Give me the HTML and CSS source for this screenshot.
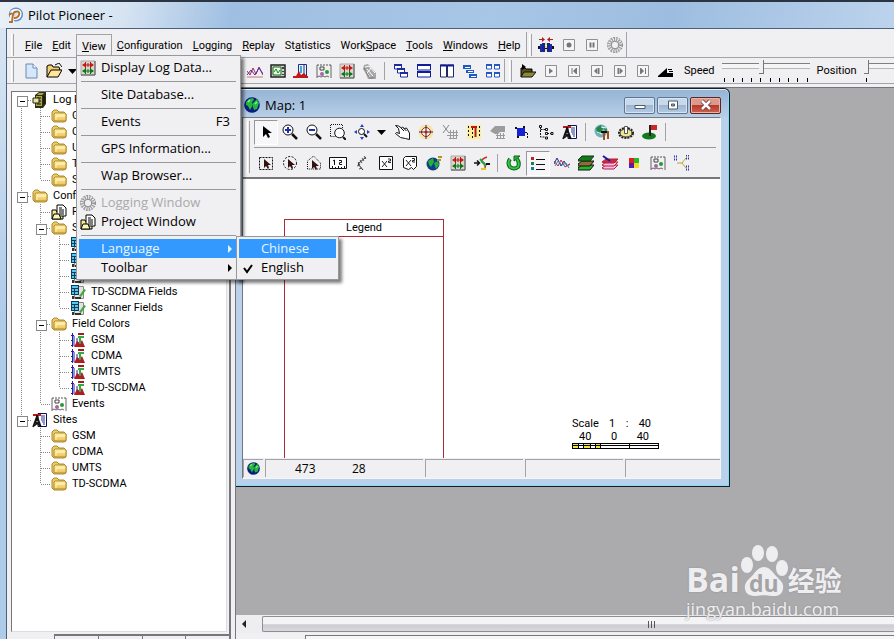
FILE: index.html
```html
<!DOCTYPE html>
<html lang="en">
<head>
<meta charset="utf-8">
<title>Pilot Pioneer</title>
<link rel="stylesheet" href="styles.css">
</head>
<body>
<svg class="defs" aria-hidden="true">
  <defs>
    <linearGradient id="fold" x1="0" y1="0" x2="0" y2="1"><stop offset="0" stop-color="#fff3b0"/><stop offset="1" stop-color="#e9c257"/></linearGradient>
    <radialGradient id="ball"><stop offset="0" stop-color="#dff0ff"/><stop offset="1" stop-color="#4b86c8"/></radialGradient>
  </defs>
  <symbol id="logo" viewBox="0 0 16 16"><circle cx="9" cy="7.500" r="7" fill="url(#ball)"/><path d="M5 15V7q0-3 4-3t3.500 3.500T7 11" fill="none" stroke="#fff" stroke-width="4"/><path d="M2 15h3l1-8q1-2.500 4-2.500T12 8q-1 3-5 3M2 8l3-2" fill="none" stroke="#b5702b" stroke-width="2"/></symbol>
  <symbol id="folder" viewBox="0 0 16 16"><path d="M1 12V4l2-2h3l2 2h5l1 1v1h1v7l-2 1H3z" fill="#eccb68" stroke="#b08a2e"/><path d="M3 13V6l1-1h10l1 1v6l-1 1z" fill="url(#fold)" stroke="#b48a2a"/><path d="M5 12V8h9" fill="none" stroke="#fff6c8"/></symbol>
  <symbol id="server" viewBox="0 0 16 16"><path d="M3 3l4-3h7v12l-3 4H3z" fill="#2d2f10"/><path d="M4 4h6v10H4zM7 1h5l-2 2H5z" fill="#a9a74a"/><path d="M5 6h4M5 9h4M5 12h4M12 4v8" stroke="#111" fill="none"/><path d="M1 6h6v5H1z" fill="#e8e69a" stroke="#222"/></symbol>
  <symbol id="project" viewBox="0 0 16 16"><path d="M1 15V6h4l1 2h6v7z" fill="#f7f08a" stroke="#000"/><path d="M6 1h6l3 3v8H6z" fill="#fff" stroke="#000"/><path d="M8 4h3M8 6h5M8 8h5M8 10h5" stroke="#000"/><path d="M1 15l2-5h5l2 5z" fill="#fdf9b4" stroke="#000"/></symbol>
  <symbol id="fields" viewBox="0 0 16 16"><path d="M4.500 2.500h9v12h-9z" fill="#e4e4dc" stroke="#888"/><path d="M1 1h8v10H1z" fill="#103c5c"/><path d="M2 2h6v2H2zM2 5h2v2H2zM5 5h3v2H5zM2 8h2v2H2zM5 8h3v2H5z" fill="#58c8f0"/><path d="M2 12h2v3H2zM5 13h6v2H5z" fill="#333"/><path d="M9 12l5-7 2 1-5 7z" fill="#4aa34a"/></symbol>
  <symbol id="colors" viewBox="0 0 16 16"><path d="M2.500 1v14M1 3.500h3M1 8.500h2M1 13.500h2" stroke="#2020a0" fill="none"/><path d="M4 4v10M7 6v8" stroke="#2020a0" stroke-width="1"/><path d="M4 15l3-6 3 2 2-3 3 7z" fill="#b01c20"/><path d="M8 1h6v2H8z" fill="#a02020"/><path d="M8 4h6v2h-3v6H9V6H8z" fill="#3aa845"/></symbol>
  <symbol id="events" viewBox="0 0 16 16"><path d="M1 2v13M15 2v13M1 14l2-1 2 1 2-1 2 1 2-1 2 1" fill="none" stroke="#666"/><path d="M1 2h14" stroke="#555" stroke-dasharray="2 1"/><path d="M4 4h4v3H4z" fill="none" stroke="#444"/><circle cx="11" cy="9" r="2" fill="#269a35"/><circle cx="6" cy="11" r="2" fill="#a467a5"/></symbol>
  <symbol id="sites" viewBox="0 0 16 16"><path d="M6 1.500h8.500v13H6z" fill="#fff" stroke="#101050"/><path d="M9 4h4M9 6h4M9 8h4M10 10h3M11 12h2" stroke="#2030a0"/><path d="M1 15L5 4l4 11M3 11h4M2 14l5-4M3 9l5 5M3 8h4" fill="none" stroke="#111" stroke-width="1.500"/><path d="M1 2h8v2H1z" fill="#c01818"/><path d="M4 3h2v6H4z" fill="#111"/></symbol>
  <symbol id="logdata" viewBox="0 0 16 16"><path d="M1 1h14v14H1z" fill="#d8d6cc" stroke="#aaa"/><path d="M15 1v14H1" fill="none" stroke="#555"/><path d="M3 5h10M5.500 2v6M8 3v4M10.500 2v6" stroke="#c01010" fill="none"/><path d="M3 11h10M5.500 8v6M8 9v4M10.500 8v6" stroke="#087818" fill="none"/><path d="M2 5l3-2v4zM14 5l-3-2v4z" fill="#d01818"/><path d="M2 11l3-2v4zM14 11l-3-2v4z" fill="#087818"/></symbol>
  <symbol id="ring" viewBox="0 0 16 16"><circle cx="8" cy="8" r="7.500" fill="none" stroke="#868686" stroke-dasharray="2 1"/><circle cx="8" cy="8" r="5.500" fill="none" stroke="#9a9a9a" stroke-width="3" stroke-dasharray="1.200 1"/><circle cx="8" cy="8" r="3.800" fill="none" stroke="#868686"/></symbol>
  <symbol id="new" viewBox="0 0 16 16"><path d="M3 1h7l4 4v10H3z" fill="#d5e8fb" stroke="#6689b4"/><path d="M10 1v4h4" fill="#fff" stroke="#6689b4"/></symbol>
  <symbol id="open" viewBox="0 0 16 16"><path d="M1 14V3l2-1h3l1 2h6l1 3" fill="#f2cf72" stroke="#000"/><path d="M1 14L5 7h11l-4 7z" fill="#ffe69a" stroke="#000"/><path d="M9 2l4-2 3 4" fill="none" stroke="#111"/></symbol>
  <symbol id="lines" viewBox="0 0 16 16"><path d="M0 8l3 4 3-7 3 6 3-7 4 8" fill="none" stroke="#b02050"/><path d="M0 12l4-5 4 5 4-7 4 6" fill="none" stroke="#4830a8"/><path d="M0 14h16" stroke="#c77"/></symbol>
  <symbol id="scope" viewBox="0 0 16 16"><path d="M1 2h14v12H1z" fill="#d6d8c8" stroke="#222" stroke-width="1.500"/><path d="M3 4h8v8H3z" fill="#e8f8e8" stroke="#126a1c"/><path d="M4 9l2-3 2 4 2-3" fill="none" stroke="#1b8428"/><path d="M13 4v2M13 8v1M13 11v1" stroke="#111" stroke-width="1.500"/></symbol>
  <symbol id="hist" viewBox="0 0 16 16"><path d="M5.500 1.500h8v12h-8z" fill="#e8f2ff" stroke="#203080"/><path d="M7 3h2v7H7z" fill="#46a8d8"/><path d="M11 2v11" stroke="#203080"/><path d="M0 15v-2h3l3-5 2 4 3-2 3 3h1v2z" fill="#c01818"/></symbol>
  <symbol id="dish" viewBox="0 0 16 16"><path d="M2 2l4-1 8 9v4l-3 2H6L4 11 1 6z" fill="#a6a6a6"/><path d="M3 4l4-1 6 7M3 7l5 7M5 6l6 7M9 5l-4 5" fill="none" stroke="#fff"/><path d="M7 15h7M2 5l5 9" stroke="#777" fill="none"/></symbol>
  <symbol id="cascade" viewBox="0 0 16 16"><g fill="#fff" stroke="#1c2c9c"><path d="M1.500 2h7v4h-7zM4.500 6h7v4h-7zM7.500 10h7v4h-7z"/></g><path d="M1 2h8M4 6h8M7 10h8" stroke="#1c2c9c" stroke-width="2"/></symbol>
  <symbol id="tileh" viewBox="0 0 16 16"><path d="M1.500 2h13v5h-13zM1.500 9h13v5h-13z" fill="#fff" stroke="#101c98"/><path d="M1 2h14M1 9h14" stroke="#101c98" stroke-width="2"/></symbol>
  <symbol id="tilev" viewBox="0 0 16 16"><path d="M1.500 2h6v12h-6zM8.500 2h6v12h-6z" fill="#fff" stroke="#222860"/><path d="M1 2.500h14" stroke="#101c98" stroke-width="2"/></symbol>
  <symbol id="stairs" viewBox="0 0 16 16"><path d="M1 2h8v4H1zM4 7h8v3H4zM7 11h8v4H7z" fill="#1c5ac4"/><path d="M3 4.500h5M6 8.500h5M9 13.500h5" stroke="#fff"/></symbol>
  <symbol id="tiles" viewBox="0 0 16 16"><g fill="#fff" stroke="#2458c0"><path d="M1.500 2h5v4h-5zM9.500 2h5v4h-5zM1.500 10h5v4h-5zM9.500 10h5v4h-5z"/></g><path d="M1 2h6M9 2h6M1 10h6M9 10h6" stroke="#2458c0" stroke-width="2"/></symbol>
  <symbol id="olive" viewBox="0 0 16 16"><path d="M1 14V5h4l1 1h6v3" fill="#55501a" stroke="#000"/><path d="M1 14l3-5h12l-4 5z" fill="#8c8836" stroke="#111"/><path d="M2 1l4 3-4 3z" fill="#000"/></symbol>
  <symbol id="cars" viewBox="0 0 16 16"><path d="M1 2.500h4M11 2.500h4" stroke="#b02020"/><path d="M4 0l3 2.500L4 5zM12 0L9 2.500 12 5z" fill="#b02020"/><path d="M0 10.500h16" stroke="#111" stroke-width="3"/><path d="M2 7h2v8H2zM12 7h2v8h-2z" fill="#1c2ca4"/><path d="M4 6h3v9H4zM9 6h3v9H9z" fill="#1420a0"/><path d="M8 6v9" stroke="#e8e048" stroke-width="2" stroke-dasharray="2 1"/></symbol>
  <symbol id="rec" viewBox="0 0 16 16"><path d="M2.500 2.500h11v11h-11z" fill="#f6f5f6" stroke="#909090"/><circle cx="8" cy="8" r="2.500" fill="#777"/></symbol>
  <symbol id="pause" viewBox="0 0 16 16"><path d="M2.500 2.500h11v11h-11z" fill="#f6f5f6" stroke="#909090"/><path d="M6.500 5.500v5M9.500 5.500v5" stroke="#777" stroke-width="2"/></symbol>
  <symbol id="play" viewBox="0 0 16 16"><path d="M2.500 2.500h11v11h-11z" fill="#f6f5f6" stroke="#909090"/><path d="M6 5l4 3-4 3z" fill="#777"/></symbol>
  <symbol id="first" viewBox="0 0 16 16"><path d="M2.500 2.500h11v11h-11z" fill="#f6f5f6" stroke="#909090"/><path d="M6 5v6M10.500 5v6" stroke="#777"/><path d="M10 5L7 8l3 3z" fill="#777"/></symbol>
  <symbol id="prev" viewBox="0 0 16 16"><path d="M2.500 2.500h11v11h-11z" fill="#f6f5f6" stroke="#909090"/><path d="M8 5L5 8l3 3z" fill="#777"/><path d="M9.500 5v6" stroke="#777" stroke-width="2"/></symbol>
  <symbol id="next" viewBox="0 0 16 16"><path d="M2.500 2.500h11v11h-11z" fill="#f6f5f6" stroke="#909090"/><path d="M8 5l3 3-3 3z" fill="#777"/><path d="M6.500 5v6" stroke="#777" stroke-width="2"/></symbol>
  <symbol id="last" viewBox="0 0 16 16"><path d="M2.500 2.500h11v11h-11z" fill="#f6f5f6" stroke="#909090"/><path d="M6 5l3 3-3 3z" fill="#777"/><path d="M5.500 5v6M10.500 5v6" stroke="#777"/></symbol>
  <symbol id="ramp" viewBox="0 0 16 16"><path d="M0 14v-1l9-8v5h6v4z" fill="#000"/><path d="M10 6.500h4M11 8.500h4" stroke="#000"/></symbol>
  <symbol id="caret" viewBox="0 0 10 16"><path d="M0 6h9L4.500 11z" fill="#000"/></symbol>
  <symbol id="globe" viewBox="0 0 16 16"><circle cx="8" cy="8" r="7.800" fill="#0c1c80"/><path d="M2 5l3-3 4-1 1 2-2 2 1 3-3 5-2-4-2-1zM9 6l4-4 2 4-2 6-3 1-1-3z" fill="#22b83c"/><path d="M4 5l2-2M11 7l2-2" stroke="#8df08d" stroke-width="1.500"/></symbol>
  <symbol id="arrow" viewBox="0 0 16 16"><path d="M5 2v11l3-3 2 4 2-1-2-4h4z" fill="#000"/></symbol>
  <symbol id="zin" viewBox="0 0 16 16"><circle cx="6" cy="6" r="5" fill="#fff" stroke="#111"/><path d="M10 10l5 5" stroke="#111" stroke-width="2.500"/><path d="M3 6h6M6 3v6" stroke="#1830b0" stroke-width="2"/></symbol>
  <symbol id="zout" viewBox="0 0 16 16"><circle cx="6" cy="6" r="5" fill="#fff" stroke="#111"/><path d="M10 10l5 5" stroke="#111" stroke-width="2.500"/><path d="M3 6h6" stroke="#1830b0" stroke-width="2"/></symbol>
  <symbol id="zbox" viewBox="0 0 16 16"><path d="M.500 12V.500h12V5M.500 12.500h5" fill="none" stroke="#111" stroke-dasharray="1 1"/><circle cx="9.500" cy="9" r="4.800" fill="#fff" stroke="#111"/><path d="M13 13l3 3" stroke="#111" stroke-width="2"/></symbol>
  <symbol id="zpan" viewBox="0 0 16 16"><path d="M8 0l2 3H6zM8 16l2-3H6zM0 8l3-2v4zM16 8l-3-2v4z" fill="#2440c8"/><circle cx="7.500" cy="7.500" r="3" fill="#fff" stroke="#111"/><path d="M10 10l3 3" stroke="#111" stroke-width="2"/></symbol>
  <symbol id="hand" viewBox="0 0 16 16"><path d="M1.500 1.500l3 3 1 5-3-1-1 1 5 4 5 1 4 1V9l-3-5-2 .5-2-1.500-1 1-3-2z" fill="#fff" stroke="#111"/><path d="M7 4l3 3M9.500 4l3 3" stroke="#111"/></symbol>
  <symbol id="target" viewBox="0 0 16 16"><circle cx="8" cy="8" r="6.500" fill="#fff7c8" stroke="#f5e79a" stroke-width="2"/><circle cx="8" cy="8" r="4.500" fill="none" stroke="#a01838"/><path d="M8 1v14M1 8h14" stroke="#301860"/><circle cx="8" cy="8" r="1.500" fill="#c01818"/></symbol>
  <symbol id="xnet" viewBox="0 0 16 16"><path d="M1 1l6 8M7 1L1 9" stroke="#888" fill="none"/><path d="M6 8.500h10M5 11.500h11M7 14.500h8M8.500 6v9M11.500 6v9M14.500 6v9" stroke="#999"/></symbol>
  <symbol id="tmark" viewBox="0 0 16 16"><path d="M1 1h14v14H1z" fill="#f9ef9c"/><path d="M2.500 2v12M6.500 4v10M13.500 2v12" fill="none" stroke="#111" stroke-dasharray="2 2"/><path d="M5 3h6M9.500 3v10" stroke="#c01818" stroke-width="2"/></symbol>
  <symbol id="graycar" viewBox="0 0 16 16"><path d="M0 7l5-5h10v6h-5l-2 2H5z" fill="#9c9c9c"/><path d="M6 11.500h9M6 14.500h9M7.500 9v6M10.500 9v6M13.500 9v6" stroke="#999"/></symbol>
  <symbol id="polygon" viewBox="0 0 16 16"><path d="M3 4h8v8H3z" fill="#1522d0"/><path d="M1 3h2v2H1zM9 2h2v2H9zM3 12h2v2H3z" fill="#111"/><path d="M11 8.500h2.500V14" fill="none" stroke="#111" stroke-dasharray="2 1"/></symbol>
  <symbol id="org" viewBox="0 0 16 16"><path d="M2.500 3v10h4M2.500 5.500h5M9 9.500h4" fill="none" stroke="#111" stroke-dasharray="2 1"/><path d="M1.500 1.500h2v2h-2zM7.500 4.500h2v2h-2zM7.500 8.500h2v2h-2zM13 8.500h2v2h-2zM7.500 13h2v2h-2z" fill="#fff" stroke="#111"/></symbol>
  <symbol id="earthtool" viewBox="0 0 16 16"><circle cx="7" cy="7" r="6.500" fill="#6cb4bc"/><path d="M2 4l5-3 2 4-4 5-2-2zM9 3l4 2-1 3z" fill="#2a8440"/><path d="M7 3l5 1M3 8l5 2" stroke="#dff"/><path d="M7 7h6v2H7z" fill="#111"/><path d="M10 9v7M14 7v8" fill="none" stroke="#a05020" stroke-width="2"/></symbol>
  <symbol id="gear" viewBox="0 0 16 16"><ellipse cx="8" cy="9" rx="7" ry="5" fill="none" stroke="#222" stroke-width="2" stroke-dasharray="2 1"/><ellipse cx="8" cy="9" rx="6" ry="4" fill="#f0e68c" stroke="#333"/><path d="M6.500 2.500h3v7h-3z" fill="#fff" stroke="#555"/></symbol>
  <symbol id="flag" viewBox="0 0 16 16"><ellipse cx="7" cy="12" rx="7" ry="3.500" fill="#127a1c"/><path d="M8 1v11" stroke="#222" stroke-width="2"/><path d="M9 1h6v5H9z" fill="#cc2828"/></symbol>
  <symbol id="selbox" viewBox="0 0 16 16"><path d="M1.500 2.500h13v12h-13z" fill="none" stroke="#111" stroke-dasharray="2 1"/><path d="M6 4v9l2-2 2 3 1-1-1-3h3z" fill="#311"/></symbol>
  <symbol id="selcirc" viewBox="0 0 16 16"><circle cx="8" cy="8" r="6.500" fill="none" stroke="#111" stroke-dasharray="2 1.500"/><path d="M6 4v9l2-2 2 3 1-1-1-3h3z" fill="#311"/></symbol>
  <symbol id="selpoly" viewBox="0 0 16 16"><path d="M1.500 14V6l6-5 7 7v6z" fill="none" stroke="#111" stroke-dasharray="1 1"/><path d="M6 5v9l2-2 2 3 1-1-1-3h3z" fill="#311"/></symbol>
  <symbol id="ruler" viewBox="0 0 18 16"><path d="M.500 2.500h17v11H.500z" fill="#fff" stroke="#111"/><path d="M3.500 13v-2M6.500 13v-1M9.500 13v-2M12.500 13v-1M15.500 13v-2M4 6l1.500-1v5M10 5.500h2.500v2h-2v2H13" fill="none" stroke="#111"/></symbol>
  <symbol id="comb" viewBox="0 0 16 16"><path d="M12 2L4 9l5 6" fill="none" stroke="#222"/><path d="M10 1l2 3M8 3l2 3M6 5l2 3M4 7l2 3M3 11l3-1M5 14l3-1" stroke="#555"/></symbol>
  <symbol id="x2" viewBox="0 0 16 16"><path d="M1.500 1.500h13v13h-13z" fill="#fff" stroke="#111"/><path d="M4 6l5 6M9 6l-5 6M10 4h2.500v2H10.500v1.500H13" fill="none" stroke="#222"/></symbol>
  <symbol id="x2r" viewBox="0 0 16 16"><path d="M1.500 3.500l2-2h11v10l-3 3-2-2-3 2-5-2z" fill="#fff" stroke="#111"/><path d="M4 5l5 6M9 5l-5 6M10 3.500h2.500v2H10.500V7H13" fill="none" stroke="#222"/></symbol>
  <symbol id="globe2" viewBox="0 0 16 16"><circle cx="7" cy="9" r="6.500" fill="#103c88"/><path d="M2 6l5-3 1 4-3 5-2-2zM8 8l4-2 1 4-3 4z" fill="#25b03c"/><path d="M12 2h4M11 5h4" stroke="#a8972c" stroke-width="2"/></symbol>
  <symbol id="path" viewBox="0 0 16 16"><path d="M0 8h5M3 5.500L5.500 8 3 10.500" fill="none" stroke="#111" stroke-width="1.500"/><path d="M13 2q-6 2-5 5 4 1 3 6" fill="none" stroke="#d02828" stroke-width="1.500"/><path d="M6 4l6 7" stroke="#1da838" stroke-width="2"/><path d="M16 9h-4" stroke="#111" stroke-width="2"/><path d="M7 14h5" stroke="#e0c828" stroke-width="2"/></symbol>
  <symbol id="refresh" viewBox="0 0 16 16"><path d="M4 4q-3 4 0 8 4 3 8 0 2-4-1-8" fill="none" stroke="#0a6418" stroke-width="4"/><path d="M4 4q-3 4 0 8 4 3 8 0 2-4-1-8" fill="none" stroke="#35c844" stroke-width="2"/><path d="M8 6V1h6z" fill="#2cb43c" stroke="#0a6418"/></symbol>
  <symbol id="list" viewBox="0 0 16 16"><path d="M1 2h3v3H1z" fill="#c02020"/><path d="M1 7h3v3H1z" fill="#18883c"/><path d="M1 12h3v3H1z" fill="#187c9c"/><path d="M6 4.500h9M6 9.500h9M6 14.500h9" stroke="#111"/></symbol>
  <symbol id="waves" viewBox="0 0 16 16"><path d="M0 9l3-6 4 8 3-5 3 5 3-2" fill="none" stroke="#24289c"/><path d="M0 6l4 5 3-6 4 7 5-3" fill="none" stroke="#c02848"/><path d="M1 11l3-5 4 4 4-2 3 5" fill="none" stroke="#2890a8"/></symbol>
  <symbol id="layers" viewBox="0 0 16 16"><path d="M0 13l4-3h12l-4 5H0z" fill="#22b82a" stroke="#111"/><path d="M0 9l4-3h12l-4 5H0z" fill="#8c6c38" stroke="#111"/><path d="M0 5l4-4h12l-4 5H0z" fill="#157820" stroke="#063a0c"/></symbol>
  <symbol id="layers2" viewBox="0 0 16 16"><g fill="#fbe" stroke="#b02038"><path d="M0 13l4-3h12l-4 4H2z"/><path d="M0 10l4-3h12l-4 4H2z"/><path d="M0 7l4-3h12l-4 4H2z" fill="#d02840"/></g><path d="M1 1l7 5" stroke="#18189c" stroke-width="2"/></symbol>
  <symbol id="quad" viewBox="0 0 16 16"><path d="M3 3h5v5H3z" fill="#e02020"/><path d="M8 3h5v5H8z" fill="#25b82b"/><path d="M3 8h5v5H3z" fill="#6018a8"/><path d="M8 8h5v5H8z" fill="#f1d821"/></symbol>
  <symbol id="fork" viewBox="0 0 16 16"><path d="M3 8h5M8 8l4-5M8 8l4 5" fill="none" stroke="#b8a62c"/><path d="M0 1.500h4M0 4.500h4M12 .500h4M12 3.500h4M12 11.500h4M12 14.500h4" fill="none" stroke="#2838a8" stroke-dasharray="1 1" stroke-width="2"/></symbol>
</svg>

<header class="title-bar">
  <svg class="icon"><use href="#logo"/></svg>
  <h1>Pilot Pioneer -</h1>
</header>

<div class="app">
  <div class="band">
    <i class="grip"></i>
    <nav class="menu-bar">
      <button><u>F</u>ile</button>
      <button><u>E</u>dit</button>
      <div class="view-menu">
        <button class="opened"><u>V</u>iew</button>
        <div class="menu" role="menu">
          <button class="item"><svg class="icon"><use href="#logdata"/></svg><span>Display Log Data...</span></button>
          <hr>
          <button class="item"><span>Site Database...</span></button>
          <hr>
          <button class="item"><span>Events</span><kbd>F3</kbd></button>
          <hr>
          <button class="item"><span>GPS Information...</span></button>
          <hr>
          <button class="item"><span>Wap Browser...</span></button>
          <hr>
          <button class="item" disabled><svg class="icon"><use href="#ring"/></svg><span>Logging Window</span></button>
          <button class="item"><svg class="icon"><use href="#project"/></svg><span>Project Window</span></button>
          <hr>
          <div class="submenu-anchor">
            <button class="item active"><span>Language</span><b class="more"></b></button>
            <div class="menu submenu" role="menu">
              <button class="item active"><span>Chinese</span></button>
              <button class="item"><svg class="icon" viewBox="0 0 16 16"><path d="M4 8l3 4 5-7" fill="none" stroke="#000" stroke-width="2"/></svg><span>English</span></button>
            </div>
          </div>
          <button class="item"><span>Toolbar</span><b class="more"></b></button>
        </div>
      </div>
      <button><u>C</u>onfiguration</button>
      <button><u>L</u>ogging</button>
      <button><u>R</u>eplay</button>
      <button>St<u>a</u>tistics</button>
      <button>Work<u>S</u>pace</button>
      <button><u>T</u>ools</button>
      <button><u>W</u>indows</button>
      <button><u>H</u>elp</button>
    </nav>
    <div class="tools record">
      <i class="grip"></i>
      <button aria-label="Connect"><svg class="icon"><use href="#cars"/></svg></button>
      <button aria-label="Record"><svg class="icon"><use href="#rec"/></svg></button>
      <button aria-label="Pause"><svg class="icon"><use href="#pause"/></svg></button>
      <button aria-label="Logging window"><svg class="icon"><use href="#ring"/></svg></button>
    </div>
  </div>

  <div class="band">
    <i class="grip"></i>
    <div class="tools file-tools">
      <button aria-label="New"><svg class="icon"><use href="#new"/></svg></button>
      <button aria-label="Open"><svg class="icon"><use href="#open"/></svg></button>
      <button class="drop" aria-label="Recent"><svg class="icon"><use href="#caret"/></svg></button>
    </div>
    <div class="tools">
      <button aria-label="Chart"><svg class="icon"><use href="#lines"/></svg></button>
      <button aria-label="Scope"><svg class="icon"><use href="#scope"/></svg></button>
      <button aria-label="Histogram"><svg class="icon"><use href="#hist"/></svg></button>
      <button aria-label="Events"><svg class="icon"><use href="#events"/></svg></button>
      <button aria-label="Log data"><svg class="icon"><use href="#logdata"/></svg></button>
      <button aria-label="Device"><svg class="icon"><use href="#dish"/></svg></button>
      <i class="sep"></i>
      <button aria-label="Cascade"><svg class="icon"><use href="#cascade"/></svg></button>
      <button aria-label="Tile horizontally"><svg class="icon"><use href="#tileh"/></svg></button>
      <button aria-label="Tile vertically"><svg class="icon"><use href="#tilev"/></svg></button>
      <button aria-label="Stairs"><svg class="icon"><use href="#stairs"/></svg></button>
      <button aria-label="Arrange"><svg class="icon"><use href="#tiles"/></svg></button>
    </div>
    <div class="tools playback">
      <i class="grip"></i>
      <button aria-label="Open replay"><svg class="icon"><use href="#olive"/></svg></button>
      <button aria-label="Play"><svg class="icon"><use href="#play"/></svg></button>
      <button aria-label="First"><svg class="icon"><use href="#first"/></svg></button>
      <button aria-label="Previous"><svg class="icon"><use href="#prev"/></svg></button>
      <button aria-label="Next"><svg class="icon"><use href="#next"/></svg></button>
      <button aria-label="Last"><svg class="icon"><use href="#last"/></svg></button>
      <button aria-label="Ramp"><svg class="icon"><use href="#ramp"/></svg></button>
      <label for="speed">Speed</label>
      <div class="slider">
        <input id="speed" type="range" min="0" max="100" value="45">
        <div class="ticks"><i></i><i></i><i></i><i></i><i></i><i></i><i></i><i></i><i></i><i></i></div>
      </div>
      <label for="position">Position</label>
      <div class="slider wide">
        <input id="position" type="range" min="0" max="100" value="0">
        <div class="ticks"><i></i></div>
      </div>
    </div>
  </div>

  <div class="main">
    <aside class="side">
      <ul class="tree">
        <li><i class="r first box"></i><svg class="icon"><use href="#server"/></svg>Log Files</li>
        <li><i class="r v"></i><i class="r t"></i><svg class="icon"><use href="#folder"/></svg>GSM</li>
        <li><i class="r v"></i><i class="r t"></i><svg class="icon"><use href="#folder"/></svg>CDMA</li>
        <li><i class="r v"></i><i class="r t"></i><svg class="icon"><use href="#folder"/></svg>UMTS</li>
        <li><i class="r v"></i><i class="r t"></i><svg class="icon"><use href="#folder"/></svg>TD-SCDMA</li>
        <li><i class="r v"></i><i class="r l"></i><svg class="icon"><use href="#folder"/></svg>Scanner</li>
        <li><i class="r t box"></i><svg class="icon"><use href="#folder"/></svg>Configuration</li>
        <li><i class="r v"></i><i class="r t"></i><svg class="icon"><use href="#project"/></svg>Project</li>
        <li><i class="r v"></i><i class="r t box"></i><svg class="icon"><use href="#folder"/></svg>Settings</li>
        <li><i class="r v"></i><i class="r v"></i><i class="r t"></i><svg class="icon"><use href="#fields"/></svg></li>
        <li><i class="r v"></i><i class="r v"></i><i class="r t"></i><svg class="icon"><use href="#fields"/></svg></li>
        <li><i class="r v"></i><i class="r v"></i><i class="r t"></i><svg class="icon"><use href="#fields"/></svg></li>
        <li><i class="r v"></i><i class="r v"></i><i class="r t"></i><svg class="icon"><use href="#fields"/></svg>TD-SCDMA Fields</li>
        <li><i class="r v"></i><i class="r v"></i><i class="r l"></i><svg class="icon"><use href="#fields"/></svg>Scanner Fields</li>
        <li><i class="r v"></i><i class="r t box"></i><svg class="icon"><use href="#folder"/></svg>Field Colors</li>
        <li><i class="r v"></i><i class="r v"></i><i class="r t"></i><svg class="icon"><use href="#colors"/></svg>GSM</li>
        <li><i class="r v"></i><i class="r v"></i><i class="r t"></i><svg class="icon"><use href="#colors"/></svg>CDMA</li>
        <li><i class="r v"></i><i class="r v"></i><i class="r t"></i><svg class="icon"><use href="#colors"/></svg>UMTS</li>
        <li><i class="r v"></i><i class="r v"></i><i class="r l"></i><svg class="icon"><use href="#colors"/></svg>TD-SCDMA</li>
        <li><i class="r v"></i><i class="r l"></i><svg class="icon"><use href="#events"/></svg>Events</li>
        <li><i class="r l box"></i><svg class="icon"><use href="#sites"/></svg>Sites</li>
        <li><i class="r"></i><i class="r t"></i><svg class="icon"><use href="#folder"/></svg>GSM</li>
        <li><i class="r"></i><i class="r t"></i><svg class="icon"><use href="#folder"/></svg>CDMA</li>
        <li><i class="r"></i><i class="r t"></i><svg class="icon"><use href="#folder"/></svg>UMTS</li>
        <li><i class="r"></i><i class="r l"></i><svg class="icon"><use href="#folder"/></svg>TD-SCDMA</li>
      </ul>
      <div class="tabs"><i></i><i></i><i></i><i></i></div>
    </aside>

    <main class="desk">
      <div class="workspace">
        <section class="window">
          <header class="window-title">
            <svg class="icon"><use href="#globe"/></svg>
            <h2>Map: 1</h2>
            <button aria-label="Minimize"><svg viewBox="0 0 16 12"><path d="M3 6.500h10v3H3z" fill="#fff" stroke="#4d5a6b"/></svg></button>
            <button aria-label="Maximize"><svg viewBox="0 0 16 12"><path d="M3.500 2h9v8h-9z" fill="#fff" stroke="#4d5a6b"/><path d="M6.500 5h3v2h-3z" fill="#8fa8c6" stroke="#4d5a6b"/></svg></button>
            <button class="close" aria-label="Close"><svg viewBox="0 0 16 12"><path d="M4 2l8 8M12 2l-8 8" stroke="#6b2a2a" stroke-width="4"/><path d="M4 2l8 8M12 2l-8 8" stroke="#fff" stroke-width="2.500"/></svg></button>
          </header>
          <div class="window-body">
            <div class="map-tools">
              <i class="grip"></i>
              <div class="rows">
                <div class="tools">
                  <button class="pressed" aria-label="Select"><svg class="icon"><use href="#arrow"/></svg></button>
                  <button aria-label="Zoom in"><svg class="icon"><use href="#zin"/></svg></button>
                  <button aria-label="Zoom out"><svg class="icon"><use href="#zout"/></svg></button>
                  <button aria-label="Zoom box"><svg class="icon"><use href="#zbox"/></svg></button>
                  <button aria-label="Zoom extent"><svg class="icon"><use href="#zpan"/></svg></button>
                  <button class="drop" aria-label="Zoom options"><svg class="icon"><use href="#caret"/></svg></button>
                  <button aria-label="Pan"><svg class="icon"><use href="#hand"/></svg></button>
                  <button aria-label="Centre"><svg class="icon"><use href="#target"/></svg></button>
                  <button aria-label="Clear"><svg class="icon"><use href="#xnet"/></svg></button>
                  <button aria-label="Mark"><svg class="icon"><use href="#tmark"/></svg></button>
                  <button aria-label="Vehicle"><svg class="icon"><use href="#graycar"/></svg></button>
                  <button aria-label="Polygon"><svg class="icon"><use href="#polygon"/></svg></button>
                  <button aria-label="Hierarchy"><svg class="icon"><use href="#org"/></svg></button>
                  <button aria-label="Sites"><svg class="icon"><use href="#sites"/></svg></button>
                  <i class="sep"></i>
                  <button aria-label="Map settings"><svg class="icon"><use href="#earthtool"/></svg></button>
                  <button aria-label="Options"><svg class="icon"><use href="#gear"/></svg></button>
                  <button aria-label="Flag"><svg class="icon"><use href="#flag"/></svg></button>
                  <i class="sep"></i>
                </div>
                <hr>
                <div class="tools">
                  <button aria-label="Select box"><svg class="icon"><use href="#selbox"/></svg></button>
                  <button aria-label="Select circle"><svg class="icon"><use href="#selcirc"/></svg></button>
                  <button aria-label="Select polygon"><svg class="icon"><use href="#selpoly"/></svg></button>
                  <button aria-label="Ruler"><svg class="icon long"><use href="#ruler"/></svg></button>
                  <button aria-label="Comb"><svg class="icon"><use href="#comb"/></svg></button>
                  <button aria-label="Area"><svg class="icon"><use href="#x2"/></svg></button>
                  <button aria-label="Free area"><svg class="icon"><use href="#x2r"/></svg></button>
                  <button aria-label="Earth"><svg class="icon"><use href="#globe2"/></svg></button>
                  <button aria-label="Log data"><svg class="icon"><use href="#logdata"/></svg></button>
                  <button aria-label="Path"><svg class="icon"><use href="#path"/></svg></button>
                  <i class="sep"></i>
                  <button aria-label="Refresh"><svg class="icon"><use href="#refresh"/></svg></button>
                  <button class="pressed" aria-label="Legend"><svg class="icon"><use href="#list"/></svg></button>
                  <button aria-label="Waves"><svg class="icon"><use href="#waves"/></svg></button>
                  <button aria-label="Layers"><svg class="icon"><use href="#layers"/></svg></button>
                  <button aria-label="Edit layers"><svg class="icon"><use href="#layers2"/></svg></button>
                  <button aria-label="Colours"><svg class="icon"><use href="#quad"/></svg></button>
                  <button aria-label="Events"><svg class="icon"><use href="#events"/></svg></button>
                  <button aria-label="Links"><svg class="icon"><use href="#fork"/></svg></button>
                </div>
              </div>
            </div>
            <div class="canvas">
              <div class="legend"><h3>Legend</h3></div>
              <div class="scale">
                <p><span>Scale</span><span>1</span><span>:</span><span>40</span></p>
                <p class="marks"><span>40</span><span>0</span><span>40</span></p>
                <svg viewBox="0 0 87 6"><path d="M0 0h87v6H0z" fill="#000"/><path d="M1 1h5v1H1zM1 3h5v2H1zM12 1h6v1h-6zM12 3h6v2h-6zM24 1h4v1h-4zM24 3h4v2h-4z" fill="#f0e848"/><path d="M7 1h4v1H7zM7 3h4v2H7zM19 1h4v1h-4zM19 3h4v2h-4zM29 1h28v1H29zM29 3h28v2H29zM58 1h28v1H58zM58 3h28v2H58z" fill="#fff"/></svg>
              </div>
            </div>
            <footer class="status">
              <div><svg class="icon"><use href="#globe"/></svg></div>
              <div class="coords"><span>473</span><span>28</span></div>
              <div></div><div></div><div></div>
            </footer>
          </div>
        </section>
        <div class="brand">
          <div class="brand-row">
            <span class="bai">Bai</span>
            <span class="paw"><svg viewBox="0 0 48 52"><g fill="#eeeef0"><ellipse cx="7" cy="20" rx="6" ry="8"/><ellipse cx="18" cy="8" rx="6" ry="8"/><ellipse cx="32" cy="9" rx="6" ry="8"/><ellipse cx="42" cy="23" rx="6" ry="8"/><path d="M24 22c5 0 8 4 12 9 5 5 8 7 7 13-1 7-7 7-11 7-6-1-10-1-16 0-5 0-10-1-11-7-1-6 3-9 7-13 4-5 7-9 12-9z"/></g></svg><b>du</b></span>
            <span class="exp">经验</span>
          </div>
          <div class="site">jingyan.baidu.com</div>
        </div>
      </div>
      <div class="scrollbar"><b></b><div class="thumb"><i></i></div></div>
      <div class="desk-tabs"><i></i></div>
    </main>
  </div>
</div>
</body>
</html>
```

FILE: styles.css
```css
* { box-sizing: border-box; }

body {
  margin: 0;
  height: 100vh;
  display: flex;
  flex-direction: column;
  overflow: hidden;
  font: 11px/16px Roboto, "Liberation Sans", sans-serif;
  color: #000;
  background: linear-gradient(#dce8f4, #aecbea 50%);
}

h1, h2, h3, p, ul { margin: 0; padding: 0; font-weight: normal; }
button { border: 0; padding: 0; background: none; font: inherit; color: inherit; }
hr { border: 0; margin: 0; }
.defs { position: absolute; width: 0; height: 0; }
.icon { width: 16px; height: 16px; flex: none; }
.long { width: 18px; }

.title-bar {
  display: flex;
  align-items: center;
  gap: 5px;
  height: 28px;
  padding: 0 7px;
  flex: none;
  border-top: 2px solid #2b3442;
  background: linear-gradient(100deg, #e9f0f7, #d6e4f2 14%, #9fbfe2 26%, #a8c6e6 55%, #9dbde0 75%, #bcd3ec);
}
h1 { font: 13px/18px "Open Sans", sans-serif; }

.app {
  flex: 1;
  min-height: 0;
  display: flex;
  flex-direction: column;
  margin-left: 6px;
  padding-top: 3px;
  border-top: 1px solid #4c6078;
  border-left: 1px solid #4c6078;
  background: #f0eff1;
}

.band {
  display: flex;
  align-items: center;
  height: 26px;
  flex: none;
  border-bottom: 1px solid #a3a2a6;
}
.grip {
  width: 3px;
  height: 22px;
  margin: 0 4px;
  border-right: 1px solid #a3a2a6;
  border-left: 1px solid #fff;
  flex: none;
}
.menu-bar { display: flex; align-items: center; margin-left: 2px; }
.menu-bar > button, .opened { padding: 3px 5px 0; height: 21px; white-space: nowrap; }
.view-menu { position: relative; }
.opened { border: 1px solid #a3a2a6; border-bottom: 0; }

.tools { display: flex; align-items: center; }
.tools button {
  width: 23px;
  height: 23px;
  display: flex;
  align-items: center;
  justify-content: center;
  flex: none;
}
.tools .drop { width: 16px; }
.drop .icon { width: 10px; }
.sep { width: 1px; height: 18px; margin: 0 4px 0 3px; background: #a3a2a6; flex: none; }
.record { margin-left: 1px; border: solid #a3a2a6; border-width: 0 1px; height: 25px; }
.record .grip { margin: 0 2px; }
.file-tools { margin-left: 1px; width: 224px; }
.playback { flex: 1; min-width: 0; border-left: 1px solid #a3a2a6; }
.playback label { margin: 0 7px; }

.slider { width: 88px; flex: none; height: 22px; }
.slider input {
  -webkit-appearance: none;
  appearance: none;
  display: block;
  width: 100%;
  height: 14px;
  margin: 0;
  background: linear-gradient(#808080 1px, #f6f5f6 1px 5px, #b8b8b8 5px) no-repeat 0 3px / 100% 6px;
}
.slider input::-webkit-slider-thumb {
  -webkit-appearance: none;
  width: 5px;
  height: 14px;
  background: #f0eff1;
  border: solid #777;
  border-width: 0 1px 1px 0;
}
.ticks { display: flex; justify-content: space-between; padding: 4px 2px 0; }
.ticks i { width: 1px; height: 4px; background: #000; }
.slider.wide { flex: 1; }

.menu {
  position: absolute;
  z-index: 5;
  left: 0;
  top: 21px;
  width: 165px;
  padding: 2px;
  border: 1px solid #98979b;
  background: #f0eff1;
  box-shadow: 3px 3px 3px rgba(0, 0, 0, .5);
  font: 13px/19px "Open Sans", sans-serif;
}
.menu hr { height: 8px; background: linear-gradient(#98979b, #98979b) no-repeat 2px 4px / 155px 1px; }
.item {
  display: flex;
  align-items: center;
  width: 100%;
  height: 19px;
  padding: 0 8px 0 1px;
  text-align: left;
  white-space: nowrap;
}
.item span { flex: 1; margin-left: 21px; }
.item .icon + span { margin-left: 5px; }
.item kbd { font: inherit; }
.item:disabled { color: #aaa9ac; }
.item.active { background: #3399ff; color: #e8f6ff; }
.more { border: 4px solid transparent; border-left-color: currentColor; border-right: 0; margin-right: -2px; }
.submenu-anchor { position: relative; }
.submenu { left: 157px; top: -3px; width: 103px; }

.main { flex: 1; min-height: 0; display: flex; margin-top: 3px; }
.side { width: 224px; flex: none; display: flex; flex-direction: column; padding: 4px 0 0 4px; border-right: 2px solid #77767a; }
.tree {
  flex: 1;
  list-style: none;
  margin-right: 2px;
  border: 1px solid #77767a;
  border-right-color: #ddd;
  border-bottom-color: #ddd;
  background: #fff;
}
.tree li { display: flex; align-items: center; height: 16px; white-space: nowrap; }
.tree .icon { margin: 0 5px 0 1px; }
.r {
  --v: repeating-linear-gradient(#888 0 1px, transparent 1px 2px);
  --h: repeating-linear-gradient(90deg, #888 0 1px, transparent 1px 2px);
  width: 19px;
  height: 16px;
  flex: none;
  background-repeat: no-repeat;
}
.v { background-image: var(--v); background-position: 9px 0; background-size: 1px 16px; }
.t { background-image: var(--v), var(--h); background-position: 9px 0, 10px 8px; background-size: 1px 16px, 9px 1px; }
.l { background-image: var(--v), var(--h); background-position: 9px 0, 10px 8px; background-size: 1px 8px, 9px 1px; }
.first { background-image: var(--v), var(--h); background-position: 9px 8px, 10px 8px; background-size: 1px 8px, 9px 1px; }
.box::before {
  content: "";
  display: block;
  width: 9px;
  height: 9px;
  margin: 4px 5px;
  border: 1px solid #888;
  background: linear-gradient(#000, #000) no-repeat center / 5px 1px #fff;
}
.tabs { display: flex; height: 5px; margin-top: 2px; padding-left: 43px; }
.tabs i { flex: 1; border: solid #77767a; border-width: 2px 0 0 1px; }

.desk { flex: 1; min-width: 0; display: flex; flex-direction: column; margin-left: 4px; border-left: 1px solid #77767a; }
.workspace { position: relative; flex: 1; border-top: 1px solid #77767a; background: #abaaac; }

.window {
  position: absolute;
  left: 0;
  top: 0;
  width: 494px;
  height: 399px;
  display: flex;
  flex-direction: column;
  padding: 0 8px 7px 6px;
  border: solid #14202c;
  border-width: 1px 1px 1px 0;
  border-top-right-radius: 6px;
  box-shadow: inset -1px -1px #7fdcf4, inset 0 1px #e6f1fb;
  background: linear-gradient(#96b3d4, #b9d1ea 30px);
}
.window-title { display: flex; align-items: center; height: 28px; padding-top: 4px; flex: none; }
.window-title .icon { margin-left: 2px; }
.window-title h2 { flex: 1; margin-left: 5px; font: 13px/18px "Open Sans", sans-serif; }
.window-title button {
  width: 31px;
  height: 17px;
  margin-left: 2px;
  border: 1px solid #5f7690;
  border-radius: 2px;
  box-shadow: inset 0 0 0 1px #d8e6f4;
  background: linear-gradient(#c8d9ec 45%, #9cb6d2 50%, #b5cbe3);
}
.window-title button svg { width: 16px; height: 12px; display: block; margin: auto; }
.window-title .close { background: linear-gradient(#dc9a8e 45%, #b93a2a 50%, #cc6450); border-color: #5c2525; box-shadow: inset 0 0 0 1px #e9b4a8; }

.window-body { flex: 1; min-height: 0; display: flex; flex-direction: column; border: 1px solid #77767a; border-right-color: #f6f6f8; border-bottom-color: #f6f6f8; background: #f0eff1; }
.map-tools { display: flex; height: 61px; flex: none; border-bottom: 2px solid #77767a; }
.map-tools > .grip { height: 52px; margin: 3px 4px; }
.rows { flex: 1; margin-right: 4px; }
.rows button { width: 24px; height: 25px; }
.rows .tools { height: 28px; }
.rows hr { height: 1px; margin: 1px 0; background: #98979b; }
.rows .tools .pressed { border: 1px solid #98979b; border-right-color: #fff; border-bottom-color: #fff; background: #f7f6f8; }

.canvas { flex: 1; position: relative; padding: 40px 0 0 41px; display: flex; background: #fff; }
.legend { width: 160px; border: 1px solid #a92b35; border-bottom: 0; }
.legend h3 { font: inherit; text-align: center; border-bottom: 1px solid #a92b35; height: 17px; }
.scale { position: absolute; right: 61px; bottom: 9px; width: 87px; line-height: 13px; }
.scale p { display: flex; justify-content: space-between; padding-right: 8px; }
.scale .marks { padding: 0 10px 0 7px; }
.scale svg { display: block; width: 87px; height: 6px; }

.status { display: grid; grid-template-columns: 20px 158px 98px 98px 1fr; gap: 2px; height: 20px; flex: none; padding: 1px 0; font: 12px/17px "Open Sans", sans-serif; }
.status div { border: solid #a3a2a6; border-width: 1px 0 0 1px; display: flex; align-items: center; }
.status .icon { width: 13px; height: 13px; margin-left: 3px; }
.coords span { width: 57px; padding-left: 29px; }

.brand { position: absolute; z-index: 1; left: 450px; bottom: -6px; color: #eeeef0; text-shadow: 0 0 2px #8e8d90; }
.brand-row { display: flex; align-items: flex-end; height: 54px; }
.bai { font: bold 34px/36px "Open Sans", sans-serif; }
.paw { display: grid; width: 48px; height: 52px; }
.paw svg, .paw b { grid-area: 1 / 1; }
.paw b { align-self: end; justify-self: center; font: bold 23px/28px "Open Sans", sans-serif; color: #a4a3a6; text-shadow: none; }
.exp { font: bold 27px/34px "Noto Sans CJK SC", sans-serif; }
.site { font: 18px/24px "Open Sans", sans-serif; }

.scrollbar { display: flex; align-items: center; height: 18px; flex: none; padding: 1px 0; background: #eeedef; }
.scrollbar b { border: 4px solid transparent; border-right-color: #222; border-left: 0; margin: 0 16px 0 6px; }
.thumb { flex: 1; height: 16px; display: flex; align-items: center; border: 1px solid #8f8e92; border-right: 0; border-radius: 2px 0 0 2px; background: linear-gradient(#f4f3f5 50%, #cccbd0 55%, #d9d8dc); }
.thumb i { width: 7px; height: 7px; margin-left: 61%; background: repeating-linear-gradient(90deg, #555 0 1px, transparent 1px 3px); }
.desk-tabs { height: 6px; flex: none; padding: 2px 0 0 69px; }
.desk-tabs i { display: block; height: 4px; border: solid #77767a; border-width: 1px 0 0 1px; background: #f6f5f7; }
```
